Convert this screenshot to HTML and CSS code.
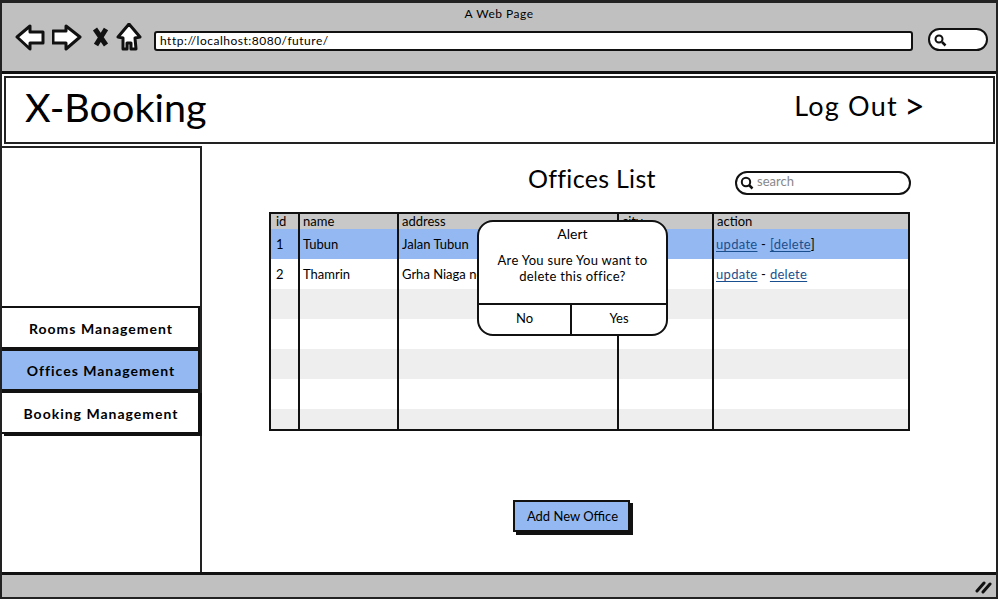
FILE: index.html
```html
<!DOCTYPE html>
<html lang="en">
<head>
    <meta charset="UTF-8">
    <title>A Web Page</title>
    <link rel="stylesheet" href="styles.css">
</head>
<body>
    <div class="window">
        <div class="chrome">
            <div class="chrome-title">A Web Page</div>
            <div class="toolbar">
                <svg class="icon-back" width="30" height="30" viewBox="0 0 30 30"><path d="M2 13 L15 2 L15 8 L28 8 L28 19 L15 19 L15 25 Z"/></svg>
                <svg class="icon-forward" width="30" height="30" viewBox="0 0 30 30"><path d="M1 7 L14 7 L14 2 L28 13 L14 25 L14 19 L1 19 Z"/></svg>
                <svg class="icon-stop" width="18" height="22" viewBox="0 0 18 22"><path d="M3 3 L14 19 M14 3 L4 19"/></svg>
                <svg class="icon-home" width="26" height="30" viewBox="0 0 26 30"><path d="M13 1 L24 14 L19 15 L20 26 L15 26 L15 20 L11 20 L11 26 L7 26 L7 15 L2 14 Z"/></svg>
                <div class="url-bar">http://localhost:8080/future/</div>
                <div class="browser-search">
                    <svg width="14" height="14" viewBox="0 0 14 14"><circle cx="6" cy="6" r="3.5"/><path d="M9 9 L12.5 12.5"/></svg>
                </div>
            </div>
        </div>

        <header class="page-header">
            <div class="logo">X-Booking</div>
            <a class="logout">Log Out <span class="chevron">&gt;</span></a>
        </header>

        <div class="body-row">
            <aside class="sidebar">
                <a class="nav-item">Rooms Management</a>
                <a class="nav-item active">Offices Management</a>
                <a class="nav-item last">Booking Management</a>
            </aside>

            <main class="content">
                <div class="title-row">
                    <h1>Offices List</h1>
                    <div class="search">
                        <svg width="16" height="16" viewBox="0 0 16 16"><circle cx="7" cy="7" r="4.2"/><path d="M10 10 L13.5 13.5"/></svg>
                        <span>search</span>
                    </div>
                </div>

                <div class="table-wrap">
                    <table class="offices">
                        <colgroup>
                            <col class="col-id"><col class="col-name"><col class="col-address"><col class="col-city"><col>
                        </colgroup>
                        <thead>
                            <tr><th>id</th><th>name</th><th>address</th><th>city</th><th>action</th></tr>
                        </thead>
                        <tbody>
                            <tr class="selected">
                                <td>1</td><td>Tubun</td><td>Jalan Tubun</td><td></td>
                                <td class="links"><a href="#">update</a> - <a href="#">[delete</a>]</td>
                            </tr>
                            <tr>
                                <td>2</td><td>Thamrin</td><td>Grha Niaga no</td><td></td>
                                <td class="links"><a href="#">update</a> - <a href="#">delete</a></td>
                            </tr>
                            <tr class="alt"><td></td><td></td><td></td><td></td><td></td></tr>
                            <tr><td></td><td></td><td></td><td></td><td></td></tr>
                            <tr class="alt"><td></td><td></td><td></td><td></td><td></td></tr>
                            <tr><td></td><td></td><td></td><td></td><td></td></tr>
                            <tr class="alt short"><td></td><td></td><td></td><td></td><td></td></tr>
                        </tbody>
                    </table>

                    <div class="alert">
                        <div class="alert-title">Alert</div>
                        <div class="alert-text">Are You sure You want to<br>delete this office?</div>
                        <div class="alert-buttons">
                            <div class="alert-no">No</div>
                            <div class="alert-yes">Yes</div>
                        </div>
                    </div>
                </div>

                <div class="actions">
                    <button type="button">Add New Office</button>
                </div>
            </main>
        </div>

        <div class="statusbar">
            <svg width="18" height="14" viewBox="0 0 18 14"><path d="M2 11 L9 3 M8 12 L15 4"/></svg>
        </div>
    </div>
</body>
</html>
```

FILE: styles.css
```css
body {
    margin: 0;
    background: #fff;
    font-family: Lato, "Noto Sans", sans-serif;
    color: #000;
}
svg {
    display: block;
    flex: none;
}
.window {
    box-sizing: border-box;
    width: 998px;
    height: 599px;
    border: solid #222;
    border-width: 3px 2px 2px 2px;
    display: flex;
    flex-direction: column;
    overflow: hidden;
}

/* browser chrome */
.chrome {
    box-sizing: border-box;
    height: 71px;
    background: #c0c0c0;
    border-bottom: 3px solid #111;
}
.chrome-title {
    text-align: center;
    font-size: 12px;
    line-height: 14px;
    padding-top: 4px;
    letter-spacing: 0.5px;
}
.toolbar {
    display: flex;
    align-items: flex-start;
    padding: 3px 0 0 13px;
}
.toolbar svg path {
    fill: #fff;
    stroke: #111;
    stroke-width: 3;
    stroke-linejoin: round;
}
.icon-forward {
    margin-left: 7px;
}
.toolbar .icon-stop {
    margin: 2px 0 0 10px;
}
.toolbar .icon-stop path {
    fill: none;
    stroke-width: 5;
}
.icon-home {
    margin-left: 6px;
    margin-top: -1px;
}
.url-bar {
    box-sizing: border-box;
    width: 759px;
    height: 20px;
    margin: 7px 0 0 12px;
    padding-left: 4px;
    background: #fff;
    border: 2px solid #111;
    border-radius: 3px;
    font-size: 12px;
    line-height: 16px;
    letter-spacing: 0.5px;
}
.browser-search {
    box-sizing: border-box;
    width: 60px;
    height: 23px;
    margin: 4px 0 0 15px;
    padding: 3px 0 0 3px;
    background: #fff;
    border: 2px solid #111;
    border-radius: 12px;
}
.browser-search circle, .search circle {
    fill: none;
    stroke: #111;
    stroke-width: 2;
}
.toolbar .browser-search path, .search path {
    fill: none;
    stroke: #111;
    stroke-width: 2.5;
}

/* page header */
.page-header {
    box-sizing: border-box;
    height: 68px;
    margin: 2px 1px 0 2px;
    padding: 0 67px 0 19px;
    border: 2px solid #222;
    display: flex;
    justify-content: space-between;
    align-items: center;
}
.logo {
    font-size: 39.5px;
    line-height: 46px;
    margin-top: -7px;
}
.logout {
    font-size: 27px;
    letter-spacing: 1.2px;
    line-height: 32px;
    margin-top: -9px;
}
.chevron {
    font-size: 36px;
    line-height: 0;
    vertical-align: -3px;
    margin-left: -2px;
}

.body-row {
    flex: 1;
    display: flex;
    margin-top: 2px;
    min-height: 0;
}

/* sidebar */
.sidebar {
    box-sizing: border-box;
    width: 200px;
    border: solid #222;
    border-width: 2px 2px 0 0;
    padding-top: 158px;
    display: flex;
    flex-direction: column;
}
.nav-item {
    box-sizing: border-box;
    width: 198px;
    height: 43px;
    padding-left: 2px;
    border: 2px solid #111;
    border-left: 0;
    background: #fff;
    font-size: 14px;
    font-weight: 700;
    letter-spacing: 1px;
    text-align: center;
    line-height: 41px;
}
.nav-item.active {
    height: 42px;
    line-height: 40px;
    background: #94b9f2;
}
.nav-item.last {
    box-shadow: 2px 2px 0 #111;
}

/* main area */
.content {
    flex: 1;
    min-width: 0;
    padding-left: 67px;
}
.title-row {
    display: flex;
    align-items: center;
    justify-content: space-between;
    width: 642px;
    height: 63px;
    padding-left: 259px;
    box-sizing: border-box;
}
h1 {
    margin: 0;
    font-size: 25px;
    font-weight: 400;
    letter-spacing: 0.3px;
}
.search {
    box-sizing: border-box;
    width: 176px;
    height: 24px;
    margin: 10px 0 0 0;
    display: flex;
    align-items: center;
    gap: 1px;
    padding-left: 2px;
    border: 2px solid #111;
    border-radius: 12px;
    font-size: 13px;
    color: #888;
}
.search span {
    padding: 0 0 3px 1px;
}

/* table */
.table-wrap {
    position: relative;
    width: 641px;
    height: 219px;
    margin-top: 3px;
}
.offices {
    box-sizing: border-box;
    width: 641px;
    height: 219px;
    table-layout: fixed;
    border-collapse: collapse;
    border: 2px solid #111;
    font-size: 13px;
}
.col-id { width: 29px; }
.col-name { width: 99px; }
.col-address { width: 220px; }
.col-city { width: 95px; }
.offices th, .offices td {
    border-left: 2px solid #111;
    padding: 0 0 0 3px;
    font-weight: 400;
    text-align: left;
    white-space: nowrap;
    overflow: hidden;
}
.offices th:first-child, .offices td:first-child {
    border-left: 0;
    padding-left: 5px;
}
.offices thead tr {
    height: 15px;
    background: #c8c8c8;
    line-height: 15px;
}
.offices tbody tr {
    height: 30px;
}
.offices tbody tr.short {
    height: 21px;
}
.offices .selected {
    background: #94b9f2;
}
.offices .alt {
    background: #eee;
}
.offices .links {
    padding-left: 2px;
    letter-spacing: 0.3px;
}
.offices a {
    color: #1a4f8f;
    text-decoration: underline;
    text-underline-offset: 2px;
}

/* alert overlay */
.alert {
    position: absolute;
    left: 208px;
    top: 8px;
    box-sizing: border-box;
    width: 191px;
    height: 116px;
    background: #fff;
    border: 2px solid #111;
    border-radius: 16px;
    font-size: 13px;
    text-align: center;
    display: flex;
    flex-direction: column;
    overflow: hidden;
}
.alert-title {
    font-size: 14px;
    line-height: 18px;
    padding-top: 3px;
}
.alert-text {
    flex: 1;
    line-height: 16px;
    padding-top: 9px;
    letter-spacing: 0.3px;
}
.alert-buttons {
    display: flex;
    height: 29px;
    border-top: 2px solid #111;
    line-height: 27px;
}
.alert-no {
    width: 91px;
    border-right: 2px solid #111;
}
.alert-yes {
    flex: 1;
}

.actions {
    width: 641px;
    display: flex;
    padding: 69px 0 0 244px;
    box-sizing: border-box;
}
button {
    box-sizing: border-box;
    width: 117px;
    height: 32px;
    background: #94b9f2;
    border: 2px solid #111;
    box-shadow: 3px 3px 0 #111;
    font-family: inherit;
    font-size: 13px;
    color: #000;
    padding: 0 0 0 2px;
}

/* bottom bar */
.statusbar {
    box-sizing: border-box;
    height: 25px;
    background: #c0c0c0;
    border-top: 3px solid #111;
    display: flex;
    justify-content: flex-end;
    padding: 5px 3px 0 0;
}
.statusbar path {
    fill: none;
    stroke: #111;
    stroke-width: 3;
    stroke-linecap: round;
}
```
